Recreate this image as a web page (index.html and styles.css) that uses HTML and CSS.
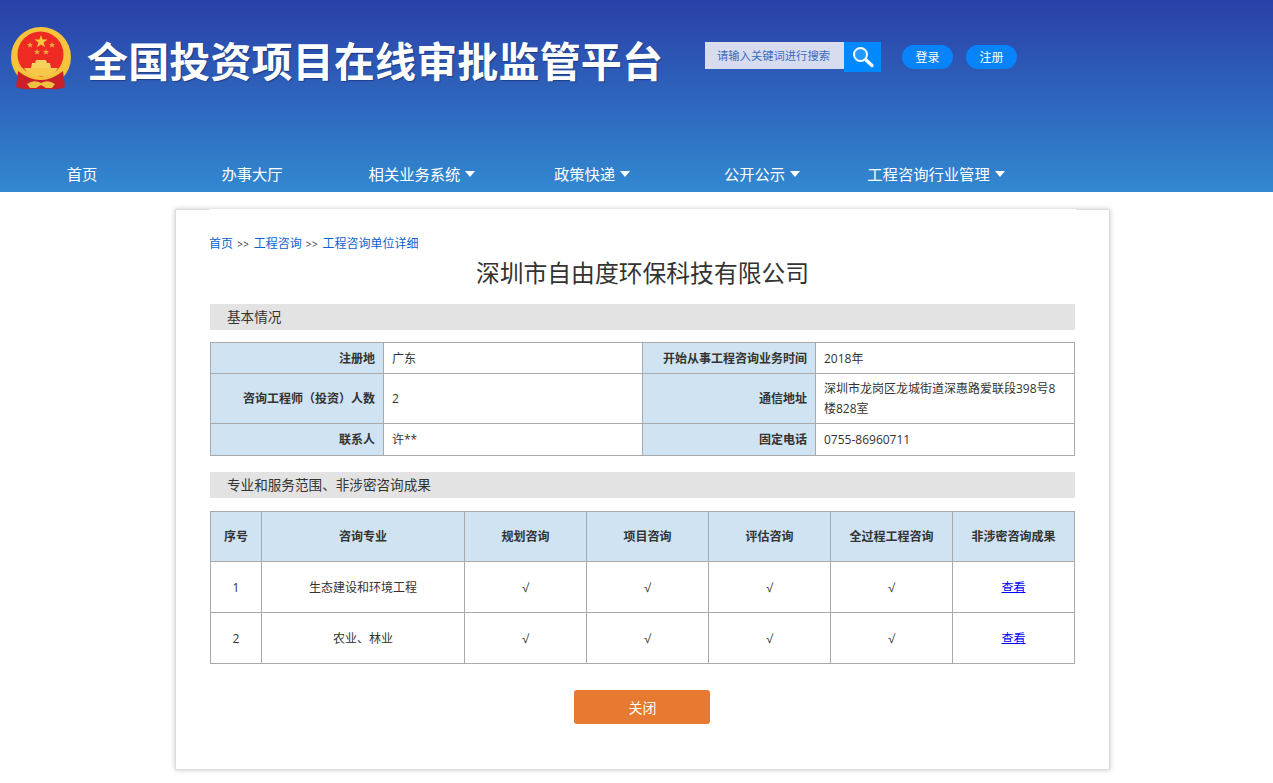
FILE: index.html
```html
<!DOCTYPE html>
<html lang="zh-CN">
<head>
    <meta charset="UTF-8">
    <title>工程咨询单位详细</title>
    <link rel="stylesheet" href="styles.css">
</head>
<body>

<div class="header">
    <div class="header-top">
        <svg class="emblem" viewBox="0 0 62 64" width="62" height="64">
            <circle cx="31" cy="30" r="30" fill="#f6c33c"/>
            <circle cx="30.5" cy="27.5" r="23" fill="#ee2a24"/>
            <polygon points="31,8 32.6,12.6 37.5,12.6 33.6,15.6 35,20.2 31,17.4 27,20.2 28.4,15.6 24.5,12.6 29.4,12.6" fill="#f8c83c"/>
            <polygon points="20,15 20.9,17 23,17 21.4,18.4 22,20.6 20,19.4 18,20.6 18.6,18.4 17,17 19.1,17" fill="#e8a838"/>
            <polygon points="42,15 42.9,17 45,17 43.4,18.4 44,20.6 42,19.4 40,20.6 40.6,18.4 39,17 41.1,17" fill="#e8a838"/>
            <polygon points="27,22 27.9,24 30,24 28.4,25.4 29,27.6 27,26.4 25,27.6 25.6,25.4 24,24 26.1,24" fill="#e8a838"/>
            <polygon points="36,22 36.9,24 39,24 37.4,25.4 38,27.6 36,26.4 34,27.6 34.6,25.4 33,24 35.1,24" fill="#e8a838"/>
            <path d="M26 33 H36 L37 36 H40 L41 41 H21 L22 36 H25 Z" fill="#f8d060"/>
            <path d="M8 44 L6 60 Q14 63 22 62 H40 Q48 63 55 60 L53 44 Q31 62 8 44 Z" fill="#c9202a"/>
            <path d="M14 41 H48 Q44 48 38 49 H24 Q18 48 14 41 Z" fill="#f6c84c"/>
            <path d="M9 40 Q31 62 53 40" fill="none" stroke="#f6c33c" stroke-width="3"/>
            <path d="M17 57 Q24 52 31 56 Q38 52 45 57 L42 61 H36 L31 58 L26 61 H20 Z" fill="#f0c040"/>
        </svg>
        <h1 class="site-title">全国投资项目在线审批监管平台</h1>
        <div class="search">
            <div class="search-input">请输入关键词进行搜索</div>
            <div class="search-btn">
                <svg viewBox="0 0 24 24" width="24" height="24">
                    <circle cx="9.5" cy="9.5" r="6.5" fill="#fff" fill-opacity=".15" stroke="#fff" stroke-width="2"/>
                    <path d="M15 15 L21 20.5" stroke="#fff" stroke-width="3.4" stroke-linecap="round"/>
                </svg>
            </div>
        </div>
        <a class="pill" href="#">登录</a>
        <a class="pill" href="#">注册</a>
    </div>
    <div class="nav">
        <a href="#">首页</a>
        <a href="#">办事大厅</a>
        <a href="#">相关业务系统<i class="caret"></i></a>
        <a href="#">政策快递<i class="caret"></i></a>
        <a href="#">公开公示<i class="caret"></i></a>
        <a href="#">工程咨询行业管理<i class="caret"></i></a>
    </div>
</div>

<div class="card">
    <div class="crumb">
        <a href="#">首页</a> <span>&gt;&gt;</span> <a href="#">工程咨询</a> <span>&gt;&gt;</span> <a href="#">工程咨询单位详细</a>
    </div>
    <h2 class="company">深圳市自由度环保科技有限公司</h2>

    <div class="section">基本情况</div>
    <table class="info">
        <colgroup><col class="c1"><col class="c2"><col class="c3"><col class="c4"></colgroup>
        <tr class="r1">
            <th>注册地</th><td>广东</td>
            <th>开始从事工程咨询业务时间</th><td>2018年</td>
        </tr>
        <tr class="r2">
            <th>咨询工程师（投资）人数</th><td>2</td>
            <th>通信地址</th><td>深圳市龙岗区龙城街道深惠路爱联段398号8楼828室</td>
        </tr>
        <tr class="r3">
            <th>联系人</th><td>许**</td>
            <th>固定电话</th><td>0755-86960711</td>
        </tr>
    </table>

    <div class="section">专业和服务范围、非涉密咨询成果</div>
    <table class="scope">
        <colgroup><col class="s1"><col class="s2"><col class="s3"><col class="s3"><col class="s3"><col class="s3"><col class="s3"></colgroup>
        <tr>
            <th>序号</th><th>咨询专业</th><th>规划咨询</th><th>项目咨询</th><th>评估咨询</th><th>全过程工程咨询</th><th>非涉密咨询成果</th>
        </tr>
        <tr>
            <td>1</td><td>生态建设和环境工程</td><td>√</td><td>√</td><td>√</td><td>√</td><td><a href="#">查看</a></td>
        </tr>
        <tr>
            <td>2</td><td>农业、林业</td><td>√</td><td>√</td><td>√</td><td>√</td><td><a href="#">查看</a></td>
        </tr>
    </table>

    <div class="actions">
        <button class="close-btn">关闭</button>
    </div>
</div>

</body>
</html>
```

FILE: styles.css
```css
* {
    box-sizing: border-box;
}
body {
    margin: 0;
    background-color: #fff;
    font-family: "Open Sans", "Noto Sans CJK SC", sans-serif;
    font-size: 12px;
    color: #333;
}
a {
    text-decoration: none;
}

/* header */
.header {
    height: 192px;
    background: linear-gradient(180deg, #2a40a8 0%, #3288d0 100%);
}
.header-top {
    height: 150px;
    display: flex;
    align-items: flex-start;
    padding-left: 10px;
}
.emblem {
    margin-top: 27px;
    flex-shrink: 0;
}
.site-title {
    width: 575px;
    margin: 31px 0 0 15px;
    font-size: 41px;
    line-height: 60px;
    font-weight: 700;
    letter-spacing: .15px;
    color: #fff;
    white-space: nowrap;
    text-shadow: 1px 1px 1px rgba(20, 40, 100, .6);
}
.search {
    display: flex;
    margin: 42px 21px 0 43px;
}
.search-input {
    width: 139px;
    height: 27px;
    padding-left: 12px;
    background-color: #d7dcee;
    color: #3a6cc0;
    font-size: 11.3px;
    line-height: 27px;
    white-space: nowrap;
}
.search-btn {
    width: 37px;
    height: 30px;
    background-color: #0088ff;
    display: flex;
    align-items: center;
    justify-content: center;
}
.pill {
    width: 51px;
    height: 24px;
    margin: 45px 13px 0 0;
    border-radius: 12px;
    background-color: #0884fb;
    color: #fff;
    line-height: 25px;
    text-align: center;
}
.nav {
    display: flex;
    height: 42px;
    margin-left: -3px;
}
.nav a {
    width: 170px;
    color: #fff;
    font-size: 15.3px;
    line-height: 48px;
    text-align: center;
    white-space: nowrap;
}
.nav a:last-child {
    margin-left: 4px;
}
.caret {
    display: inline-block;
    margin-left: 5px;
    vertical-align: 3px;
    border-left: 5.5px solid transparent;
    border-right: 5.5px solid transparent;
    border-top: 6px solid #fff;
}

/* card */
.card {
    width: 935px;
    height: 561px;
    margin: 17px 0 13px 175px;
    padding: 0 34px;
    background-color: #fff;
    border: 1px solid #ddd;
    box-shadow: 0 0 5px rgba(0, 0, 0, .22);
}
.crumb {
    margin: -1px 0 0 -1px;
    width: 867px;
    padding-top: 26px;
    height: 44px;
    line-height: 18px;
    background-color: #fff;
    color: #333;
    white-space: nowrap;
}
.crumb a {
    color: #0b62d0;
}
.crumb span {
    font-size: 10px;
    margin: 0 1px;
    letter-spacing: .5px;
}
.company {
    margin: 0;
    height: 51px;
    font-size: 23.8px;
    font-weight: 400;
    line-height: 40px;
    text-align: center;
    color: #333;
}
.section {
    height: 26px;
    padding-left: 17px;
    background-color: #e3e3e3;
    font-size: 13.6px;
    line-height: 26px;
}

/* tables */
table {
    width: 865px;
    border-collapse: collapse;
    table-layout: fixed;
}
th, td {
    border: 1px solid #aaa;
    font-size: 12px;
    line-height: 20px;
}
th {
    background-color: #cfe3f2;
    font-weight: 700;
}
.info {
    margin: 12px 0 16px;
}
.info th {
    padding: 0 8px;
    text-align: right;
}
.info td {
    padding: 0 8px;
}
.c1, .c3 {
    width: 173px;
}
.c2 {
    width: 259px;
}
.r1 { height: 31px; }
.r2 { height: 50px; }
.r3 { height: 32px; }
.info .r1 th, .info .r1 td {
    padding-top: 2px;
}
.scope {
    margin-top: 13px;
}
.scope th, .scope td {
    height: 51px;
    text-align: center;
}
.scope td {
    padding-top: 2px;
}
.scope th {
    height: 50px;
}
.s1 {
    width: 51px;
}
.s2 {
    width: 203px;
}
.s3 {
    width: 122px;
}
.scope a {
    color: #00f;
    text-decoration: underline;
    text-underline-offset: 0;
}
.actions {
    margin-top: 26px;
    padding-right: 2px;
    text-align: center;
}
.close-btn {
    width: 136px;
    height: 34px;
    padding: 0 0 0 2px;
    border: none;
    border-radius: 3px;
    background-color: #e57a30;
    color: #fff;
    font-family: inherit;
    font-size: 14px;
}
```
